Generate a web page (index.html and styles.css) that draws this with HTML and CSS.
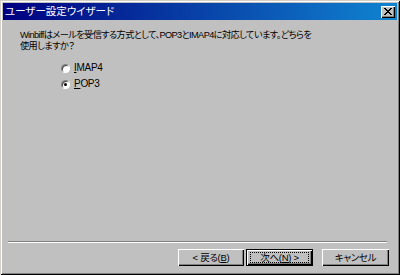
FILE: index.html
```html
<!DOCTYPE html>
<html lang="ja">
<head>
<meta charset="utf-8">
<link rel="stylesheet" href="styles.css">
</head>
<body>
<div class="window">
  <div class="titlebar">
    <span class="title">ユーザー設定ウイザード</span>
    <span class="close"><svg width="8" height="7" viewBox="0 0 8 7"><path d="M0 0h2v1h1v1h2v-1h1v-1h2v1h-1v1h-1v1h-1v1h1v1h1v1h1v1h-2v-1h-1v-1h-2v1h-1v1h-2v-1h1v-1h1v-1h1v-1h-1v-1h-1v-1h-1z" fill="#000"/></svg></span>
  </div>
  <div class="content">
    <p class="question">Winbiffはメールを受信する方式として、POP3とIMAP4に対応しています。どちらを<br>使用しますか？</p>
    <div class="options">
      <label class="option"><span class="radio"></span><span><u>I</u>MAP4</span></label>
      <label class="option"><span class="radio checked"></span><span><u>P</u>OP3</span></label>
    </div>
  </div>
  <div class="separator"></div>
  <div class="buttons">
    <div class="btn">&lt; 戻る(<u>B</u>)</div>
    <div class="btn default"><span class="focus">次へ(<u>N</u>) &gt;</span></div>
    <div class="btn cancel">キャンセル</div>
  </div>
</div>
</body>
</html>
```
FILE: styles.css
```css
html, body {
  margin: 0;
  padding: 0;
  background: #c0c0c0;
}
body {
  font-family: "Liberation Sans", "Noto Sans CJK JP", sans-serif;
  font-size: 10px;
  font-feature-settings: "palt";
  color: #000;
}
.window {
  width: 400px;
  height: 275px;
  box-sizing: border-box;
  padding: 3px;
  background: #c0c0c0;
  box-shadow: inset 1px 1px 0 #d4d0c8, inset -1px -1px 0 #000, inset 2px 2px 0 #fff, inset -2px -2px 0 #808080;
  display: flex;
  flex-direction: column;
}
.titlebar {
  height: 17px;
  flex: none;
  background: linear-gradient(to right, #000080, #1084d0);
  display: flex;
  align-items: center;
  justify-content: space-between;
  padding: 0 2px 0 2px;
}
.title {
  color: #fff;
  font-size: 10.5px;
  line-height: 17px;
}
.close {
  width: 14px;
  height: 12px;
  background: #c0c0c0;
  box-shadow: inset 1px 1px 0 #fff, inset -1px -1px 0 #000, inset -2px -2px 0 #808080;
  display: flex;
  align-items: center;
  justify-content: center;
}
.close svg { display: block; margin-top: -1px; }
.content {
  flex: 1;
  padding-left: 17px;
}
.question {
  margin: 10px 0 0 0;
  line-height: 11px;
  font-size: 9.2px;
  letter-spacing: -0.6px;
  white-space: nowrap;
}
.options {
  display: flex;
  flex-direction: column;
  gap: 4px;
  margin-top: 10px;
  padding-left: 41px;
}
.option {
  display: flex;
  align-items: center;
  gap: 4px;
  height: 12px;
  line-height: 12px;
  letter-spacing: -0.3px;
}
.radio {
  width: 9px;
  height: 9px;
  box-sizing: border-box;
  border-radius: 50%;
  background: #fff;
  border: 1px solid;
  border-color: #808080 #fff #fff #808080;
  box-shadow: inset 1px 1px 0 #404040;
  position: relative;
  flex: none;
}
.radio.checked::after {
  content: "";
  position: absolute;
  left: 2px;
  top: 2px;
  width: 3px;
  height: 3px;
  border-radius: 50%;
  background: #000;
}
.separator {
  flex: none;
  border-top: 1px solid #808080;
  border-bottom: 1px solid #fff;
  height: 0;
  margin: 0 10px 0 5px;
}
.buttons {
  flex: none;
  display: flex;
  justify-content: flex-end;
  padding: 6px 8px 6px 0;
}
.btn {
  width: 66px;
  height: 17px;
  box-sizing: border-box;
  display: flex;
  align-items: center;
  justify-content: center;
  background: #c0c0c0;
  box-shadow: inset 1px 1px 0 #fff, inset -1px -1px 0 #000, inset -2px -2px 0 #808080;
  font-size: 9.5px;
  letter-spacing: -0.3px;
  line-height: 12px;
}
.btn.default {
  width: 67px;
  margin-left: 2px;
  border: 1px solid #000;
}
.focus {
  display: flex;
  align-items: center;
  justify-content: center;
  width: 57px;
  height: 9px;
  outline: 1px dotted #000;
}
.btn.cancel {
  width: 67px;
  margin-left: 9px;
}
u { text-decoration: underline; text-underline-offset: 1px; }
```
